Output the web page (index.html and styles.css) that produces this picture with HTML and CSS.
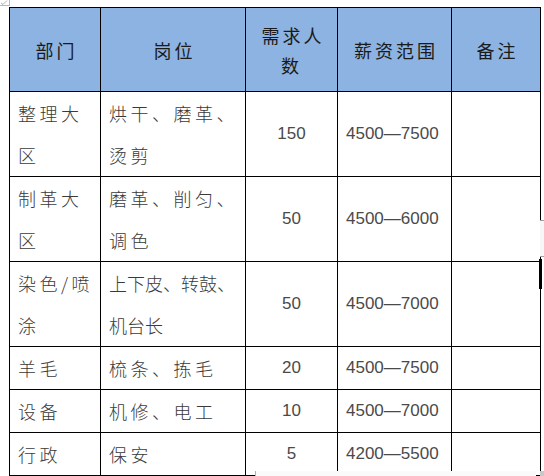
FILE: index.html
```html
<!DOCTYPE html>
<html lang="zh">
<head>
<meta charset="utf-8">
<link rel="stylesheet" href="styles.css">
</head>
<body>
<span class="handle"><svg width="9" height="5" viewBox="0 0 9 5"><path d="M1 3 L3 4.5 L7 0.5" fill="none" stroke="#999" stroke-width="0.8"/></svg></span>
<table class="jobs">
  <colgroup>
    <col class="c1"><col class="c2"><col class="c3"><col class="c4"><col class="c5">
  </colgroup>
  <thead>
    <tr class="head">
      <th>部门</th>
      <th>岗位</th>
      <th class="two">需求人<br>数</th>
      <th>薪资范围</th>
      <th>备注</th>
    </tr>
  </thead>
  <tbody>
    <tr class="tall">
      <td class="cn">整理大<br>区</td>
      <td class="cn">烘干、磨革、<br>烫剪</td>
      <td class="num">150</td>
      <td class="pay">4500—7500</td>
      <td></td>
    </tr>
    <tr class="tall">
      <td class="cn">制革大<br>区</td>
      <td class="cn">磨革、削匀、<br>调色</td>
      <td class="num">50</td>
      <td class="pay">4500—6000</td>
      <td></td>
    </tr>
    <tr class="tall">
      <td class="cn">染色/喷<br>涂</td>
      <td class="cn tight">上下皮、转鼓、<br>机台长</td>
      <td class="num">50</td>
      <td class="pay">4500—7000</td>
      <td></td>
    </tr>
    <tr class="short">
      <td class="cn">羊毛</td>
      <td class="cn">梳条、拣毛</td>
      <td class="num">20</td>
      <td class="pay">4500—7500</td>
      <td></td>
    </tr>
    <tr class="short">
      <td class="cn">设备</td>
      <td class="cn">机修、电工</td>
      <td class="num">10</td>
      <td class="pay">4500—7000</td>
      <td></td>
    </tr>
    <tr class="short">
      <td class="cn">行政</td>
      <td class="cn">保安</td>
      <td class="num">5</td>
      <td class="pay">4200—5500</td>
      <td></td>
    </tr>
  </tbody>
</table>
<span class="mark-bracket"></span>
<span class="mark-bar"></span>
<span class="mark-bottom"></span>
<span class="mark-corner"></span>
</body>
</html>
```
FILE: styles.css
```css
html, body {
  margin: 0;
  padding: 0;
  background: #ffffff;
}
body {
  position: relative;
  width: 544px;
  height: 476px;
  overflow: hidden;
  padding-top: 7px;
  padding-left: 9px;
  box-sizing: border-box;
  font-family: "Noto Sans CJK SC", sans-serif;
}
.jobs {
  border-collapse: collapse;
  table-layout: fixed;
  width: 531px;
}
.c1 { width: 91px; }
.c2 { width: 145px; }
.c3 { width: 92px; }
.c4 { width: 114px; }
.c5 { width: 89px; }
.jobs th, .jobs td {
  border: 1px solid #000;
  padding: 0;
  vertical-align: middle;
}
.head {
  height: 84px;
}
.head th {
  background: #8db3e2;
  font-weight: 400;
  font-size: 18px;
  letter-spacing: 3px;
  text-indent: 3px;
  color: #1a1a1a;
  line-height: 30px;
  text-align: center;
}
.tall { height: 84px; }
.short { height: 42px; }
.cn {
  font-family: "Noto Sans CJK SC", sans-serif;
  font-weight: 300;
  font-size: 18px;
  line-height: 42px;
  letter-spacing: 3.5px;
  color: #3a3a3a;
  padding-left: 8px !important;
  white-space: nowrap;
  overflow: hidden;
}
.cn.tight {
  letter-spacing: 0px;
}
.num, .pay {
  font-family: "Liberation Sans", Arial, sans-serif;
  font-size: 17px;
  color: #4a4a4a;
}
.num {
  text-align: center;
}
.pay {
  padding-left: 8px !important;
  white-space: nowrap;
}
.handle {
  position: absolute;
  left: 0;
  top: 0;
  width: 9px;
  height: 5px;
  border-right: 1px solid #b8b8b8;
  border-bottom: 1px solid #b8b8b8;
  display: flex;
}
.mark-bracket {
  position: absolute;
  left: 540px;
  top: 220px;
  width: 4px;
  height: 35px;
  border-top: 1px solid #a0a0a0;
  border-bottom: 1px solid #a0a0a0;
  background: #f7f7f7;
}
.mark-bar {
  position: absolute;
  left: 539px;
  top: 259px;
  width: 3px;
  height: 30px;
  background: #000;
}
.mark-bottom {
  position: absolute;
  left: 255px;
  top: 471px;
  width: 280px;
  height: 5px;
  border-left: 1px solid #b0b0b0;
  background: #fafafa;
}
.mark-corner {
  position: absolute;
  left: 540px;
  top: 471px;
  width: 4px;
  height: 5px;
  background: #c8c8c8;
}
```
